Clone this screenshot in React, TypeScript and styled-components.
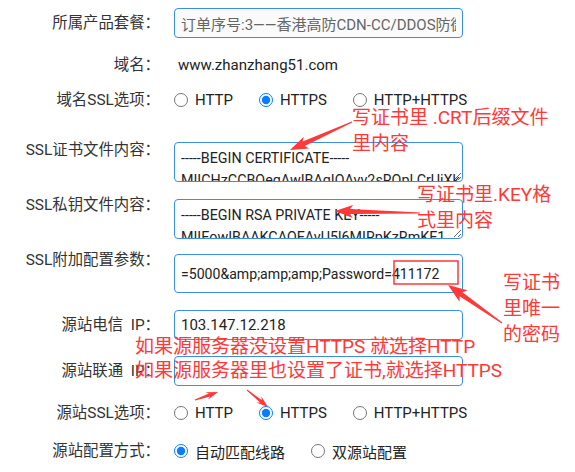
import React from "react";
import styled, { createGlobalStyle } from "styled-components";

const Global = createGlobalStyle`
  html, body { margin: 0; padding: 0; background: #fff; }
  body { font-family: Roboto, "Noto Sans CJK SC", sans-serif; color: #333; }
`;

const Page = styled.div`
  position: relative;
  width: 575px;
  height: 472px;
  overflow: hidden;
  padding-top: 8px;
  box-sizing: border-box;
`;

const Row = styled.div<{ $mt?: number; $h?: number; $top?: boolean }>`
  display: flex;
  align-items: ${(p) => (p.$top ? "flex-start" : "center")};
  margin-top: ${(p) => p.$mt ?? 0}px;
  min-height: ${(p) => p.$h ?? 30}px;
`;

const Label = styled.div<{ $offset?: number }>`
  width: 160px;
  flex: none;
  text-align: right;
  font-size: 15.4px;
  line-height: 20px;
  color: #333;
  white-space: pre;
  margin-top: ${(p) => (p.$offset !== undefined ? p.$offset - 10 : 0)}px;
`;

const Field = styled.div`
  margin-left: 14px;
  width: 289px;
  display: flex;
  align-items: center;
`;

const Value = styled.span`
  font-size: 15px;
  color: #222;
  padding-left: 4px;
`;

const TextInput = styled.input<{ $h?: number; $muted?: boolean; $fs?: number }>`
  box-sizing: border-box;
  width: 289px;
  height: ${(p) => p.$h ?? 30}px;
  border: 1px solid #3a8ee6;
  border-radius: 4px;
  padding: 0 6px;
  font-family: Roboto, "Noto Sans CJK SC", sans-serif;
  font-size: ${(p) => p.$fs ?? 15}px;
  color: ${(p) => (p.$muted ? "#666" : "#222")};
  background: ${(p) => (p.$muted ? "#fafafa" : "#fff")};
  outline: none;
`;

const TextArea = styled.textarea`
  box-sizing: border-box;
  display: block;
  width: 289px;
  height: 40px;
  border: 1px solid #3a8ee6;
  border-radius: 4px;
  padding: 4px 6px;
  font: 14.3px Roboto, "Noto Sans CJK SC", sans-serif;
  line-height: 22px;
  color: #222;
  background: #fff;
  overflow: hidden;
  resize: both;
  white-space: pre;
  outline: none;
`;

const RadioGroup = styled.div`
  display: flex;
  align-items: center;
`;

const Option = styled.label`
  display: flex;
  align-items: center;
  gap: 7px;
  margin-right: 26px;
  font-size: 15px;
  color: #222;
  white-space: nowrap;
`;

const Radio = styled.input.attrs({ type: "radio" })`
  margin: 0;
  width: 14px;
  height: 14px;
  accent-color: #0a7cff;
`;

const Note = styled.div<{ $x: number; $y: number; $lh?: number }>`
  position: absolute;
  left: ${(p) => p.$x}px;
  top: ${(p) => p.$y}px;
  color: #ff3838;
  font-family: Roboto, "Noto Sans CJK SC", sans-serif;
  font-size: 19px;
  line-height: ${(p) => p.$lh ?? 26}px;
  white-space: nowrap;
  pointer-events: none;
`;

const Overlay = styled.svg`
  position: absolute;
  left: 0;
  top: 0;
  width: 575px;
  height: 472px;
  pointer-events: none;
`;

function arrowPoints(
  tx: number,
  ty: number,
  hx: number,
  hy: number,
  headLen = 15,
  headW = 13,
  tailW = 1,
  neckW = 5
) {
  const dx = hx - tx;
  const dy = hy - ty;
  const len = Math.hypot(dx, dy);
  const ux = dx / len;
  const uy = dy / len;
  const nx = -uy;
  const ny = ux;
  const bx = hx - ux * headLen;
  const by = hy - uy * headLen;
  const wx = hx - ux * (headLen + 3);
  const wy = hy - uy * (headLen + 3);
  const pts: [number, number][] = [
    [tx + (nx * tailW) / 2, ty + (ny * tailW) / 2],
    [bx + (nx * neckW) / 2, by + (ny * neckW) / 2],
    [wx + (nx * headW) / 2, wy + (ny * headW) / 2],
    [hx, hy],
    [wx - (nx * headW) / 2, wy - (ny * headW) / 2],
    [bx - (nx * neckW) / 2, by - (ny * neckW) / 2],
    [tx - (nx * tailW) / 2, ty - (ny * tailW) / 2],
  ];
  return pts.map((p) => p.map((v) => v.toFixed(1)).join(",")).join(" ");
}

type Opt = { text: string; checked?: boolean };

const Radios: React.FC<{ name: string; options: Opt[] }> = ({ name, options }) => (
  <RadioGroup>
    {options.map((o) => (
      <Option key={o.text}>
        <Radio name={name} defaultChecked={o.checked} />
        {o.text}
      </Option>
    ))}
  </RadioGroup>
);

const PASSWORD_PARAMS = "=5000&amp;amp;amp;Password=411172";

export default function App() {
  return (
    <>
      <Global />
      <Page>
        <Row $mt={0}>
          <Label>所属产品套餐：</Label>
          <Field>
            <TextInput $muted readOnly value={"订单序号:3——香港高防CDN-CC/DDOS防御"} />
          </Field>
        </Row>
        <Row $mt={12}>
          <Label>域名：</Label>
          <Field>
            <Value>www.zhanzhang51.com</Value>
          </Field>
        </Row>
        <Row $mt={5}>
          <Label>域名SSL选项：</Label>
          <Field>
            <Radios
              name="ssl"
              options={[{ text: "HTTP" }, { text: "HTTPS", checked: true }, { text: "HTTP+HTTPS" }]}
            />
          </Field>
        </Row>
        <Row $mt={27} $h={40} $top>
          <Label $offset={8}>SSL证书文件内容：</Label>
          <Field>
            <TextArea
              readOnly
              value={"-----BEGIN CERTIFICATE-----\nMIICHzCCBQegAwIBAgIQAvv2sROpLCrUiXk\n"}
            />
          </Field>
        </Row>
        <Row $mt={17} $h={40} $top>
          <Label $offset={6}>SSL私钥文件内容：</Label>
          <Field>
            <TextArea
              readOnly
              value={"-----BEGIN RSA PRIVATE KEY-----\nMIIEowIBAAKCAQEAvU5l6MIRpKzRmKE1\n"}
            />
          </Field>
        </Row>
        <Row $mt={15} $h={39} $top>
          <Label $offset={6}>SSL附加配置参数：</Label>
          <Field>
            <TextInput $h={39} $fs={14.1} readOnly value={PASSWORD_PARAMS} />
          </Field>
        </Row>
        <Row $mt={17}>
          <Label>{"源站电信  IP："}</Label>
          <Field>
            <TextInput readOnly value="103.147.12.218" />
          </Field>
        </Row>
        <Row $mt={16}>
          <Label>{"源站联通  IP："}</Label>
          <Field>
            <TextInput readOnly value="" />
          </Field>
        </Row>
        <Row $mt={12}>
          <Label>源站SSL选项：</Label>
          <Field>
            <Radios
              name="src"
              options={[{ text: "HTTP" }, { text: "HTTPS", checked: true }, { text: "HTTP+HTTPS" }]}
            />
          </Field>
        </Row>
        <Row $mt={8}>
          <Label>源站配置方式：</Label>
          <Field>
            <Radios name="mode" options={[{ text: "自动匹配线路", checked: true }, { text: "双源站配置" }]} />
          </Field>
        </Row>

        <Note $x={352} $y={105}>
          写证书里 .CRT后缀文件
          <br />
          里内容
        </Note>
        <Note $x={417} $y={182}>
          写证书里.KEY格
          <br />
          式里内容
        </Note>
        <Note $x={503} $y={270}>
          写证书
          <br />
          里唯一
          <br />
          的密码
        </Note>
        <Note $x={135} $y={335} $lh={24}>
          如果源服务器没设置HTTPS 就选择HTTP
          <br />
          如果源服务器里也设置了证书,就选择HTTPS
        </Note>

        <Overlay viewBox="0 0 575 472">
          <g fill="#ff3838">
            <polygon points={arrowPoints(352, 122, 290, 150)} />
            <polygon points={arrowPoints(420, 213, 335, 211)} />
            <polygon points={arrowPoints(502, 323, 448, 285, 16, 14, 1, 5)} />
            <polygon points={arrowPoints(195, 400, 218, 392, 9, 8, 1, 3)} />
            <polygon points={arrowPoints(247, 390, 268, 407, 9, 8, 1, 3)} />
          </g>
          <rect x={394} y={261} width={64} height={23} fill="none" stroke="#ff3838" strokeWidth={1.5} />
        </Overlay>
      </Page>
    </>
  );
}
